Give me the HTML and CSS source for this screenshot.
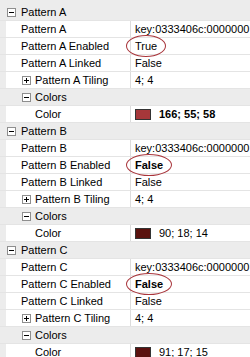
FILE: index.html
```html
<!DOCTYPE html>
<html lang="en">
<head>
    <meta charset="UTF-8">
    <title>Property Grid - Patterns</title>
    <link rel="stylesheet" href="styles.css">
</head>
<body>
    <div class="grid">
        <div class="row cat first"><span class="box"></span>Pattern A</div>
        <div class="row"><div class="name">Pattern A</div><div class="value">key:0333406c:0000000</div></div>
        <div class="row"><div class="name">Pattern A Enabled</div><div class="value"><span class="mark">True</span></div></div>
        <div class="row"><div class="name">Pattern A Linked</div><div class="value">False</div></div>
        <div class="row"><div class="name sub"><span class="box plus"></span>Pattern A Tiling</div><div class="value">4; 4</div></div>
        <div class="row cat subcat"><span class="box"></span>Colors</div>
        <div class="row"><div class="name child">Color</div><div class="value"><span class="swatch" style="background: rgb(166, 55, 58)"></span><b>166; 55; 58</b></div></div>

        <div class="row cat"><span class="box"></span>Pattern B</div>
        <div class="row"><div class="name">Pattern B</div><div class="value">key:0333406c:0000000</div></div>
        <div class="row"><div class="name">Pattern B Enabled</div><div class="value"><span class="mark"><b>False</b></span></div></div>
        <div class="row"><div class="name">Pattern B Linked</div><div class="value">False</div></div>
        <div class="row"><div class="name sub"><span class="box plus"></span>Pattern B Tiling</div><div class="value">4; 4</div></div>
        <div class="row cat subcat"><span class="box"></span>Colors</div>
        <div class="row"><div class="name child">Color</div><div class="value"><span class="swatch" style="background: rgb(90, 18, 14)"></span>90; 18; 14</div></div>

        <div class="row cat"><span class="box"></span>Pattern C</div>
        <div class="row"><div class="name">Pattern C</div><div class="value">key:0333406c:0000000</div></div>
        <div class="row"><div class="name">Pattern C Enabled</div><div class="value"><span class="mark"><b>False</b></span></div></div>
        <div class="row"><div class="name">Pattern C Linked</div><div class="value">False</div></div>
        <div class="row"><div class="name sub"><span class="box plus"></span>Pattern C Tiling</div><div class="value">4; 4</div></div>
        <div class="row cat subcat"><span class="box"></span>Colors</div>
        <div class="row"><div class="name child">Color</div><div class="value"><span class="swatch" style="background: rgb(91, 17, 15)"></span>91; 17; 15</div></div>
    </div>
</body>
</html>
```

FILE: styles.css
```css
* {
    box-sizing: border-box;
}
body {
    margin: 0;
    background-color: #fff;
    color: #000;
    font-family: 'Liberation Sans', Arial, sans-serif;
    font-size: 11px;
}
.grid {
    width: 250px;
    height: 357px;
    overflow: hidden;
}
.row {
    display: flex;
    align-items: center;
    height: 17px;
    border-bottom: 1px solid #e4e4e4;
    background-color: #fff;
    white-space: nowrap;
    line-height: 16px;
}
.row.first {
    height: 21px;
    padding-top: 4px;
}
.name {
    width: 131px;
    flex-shrink: 0;
    height: 16px;
    padding-left: 15px;
    border-left: 6px solid #ececec;
    border-right: 1px solid #dcdcdc;
    display: flex;
    align-items: center;
    overflow: hidden;
}
.name.sub {
    padding-left: 16px;
}
.name.sub .box {
    margin-right: 4px;
}
.name.child {
    padding-left: 29px;
}
.value {
    position: relative;
    padding-left: 4px;
    height: 16px;
    display: flex;
    align-items: center;
    overflow: visible;
}
.cat {
    background-color: #ececec;
    padding-left: 7px;
}
.cat .box {
    margin-right: 5px;
}
.cat.subcat {
    padding-left: 22px;
}
.cat.subcat .box {
    margin-right: 4px;
}
.box {
    position: relative;
    display: inline-block;
    width: 9px;
    height: 9px;
    border: 1px solid #8e8e8e;
    background-color: #fff;
    flex-shrink: 0;
}
.box::before {
    content: '';
    position: absolute;
    left: 1px;
    top: 3px;
    width: 5px;
    height: 1px;
    background-color: #000;
}
.box.plus::after {
    content: '';
    position: absolute;
    left: 3px;
    top: 1px;
    width: 1px;
    height: 5px;
    background-color: #000;
}
.swatch {
    display: inline-block;
    width: 16px;
    height: 11px;
    border: 1px solid #333;
    margin-right: 8px;
}
.mark {
    position: relative;
}
.mark::after {
    content: '';
    position: absolute;
    left: -9px;
    right: -9px;
    top: -3px;
    bottom: -3px;
    border: 1px solid #a8343a;
    border-radius: 50%;
}
```
